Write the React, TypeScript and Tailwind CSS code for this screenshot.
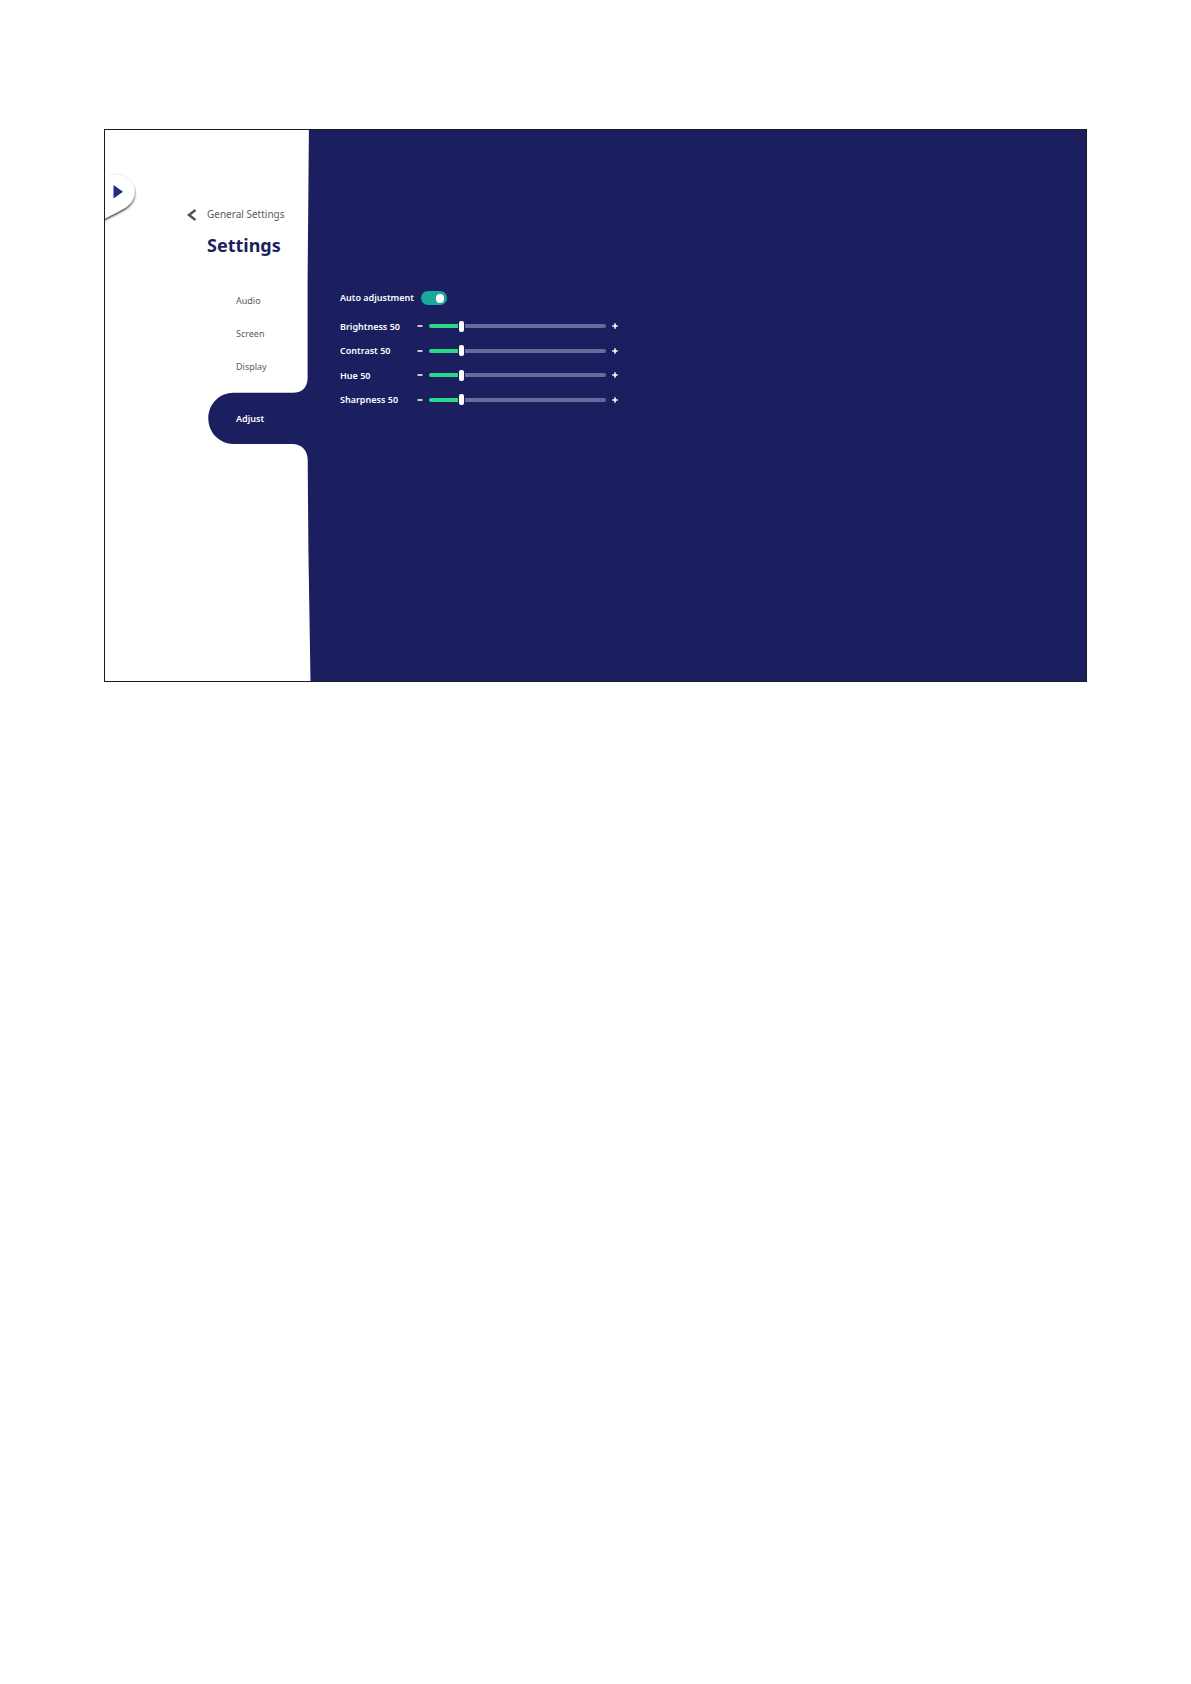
import { useState } from "react";

const menu = ["Audio", "Screen", "Display"];
const controls = ["Brightness", "Contrast", "Hue", "Sharpness"];
const MAX = 286;

function PanelEdge() {
  return (
    <svg
      className="pointer-events-none absolute inset-y-0 right-0 h-full w-[206px]"
      viewBox="0 0 206 551"
      preserveAspectRatio="none"
      aria-hidden="true"
    >
      <path
        fill="#1b1f5f"
        d="M206 0H203.9L202.6 150V247.5C202.6 257 197.500 262.700 188 262.700H128.500C114.500 262.700 103.300 274 103.300 288.300C103.300 302.600 114.500 314 128.500 314H187C197 314 202.600 320.500 202.700 330L203.400 420L205.500 551H206Z"
      />
    </svg>
  );
}

function DrawerHandle() {
  return (
    <button type="button" aria-label="Open menu" className="block h-[56px] w-[40px]">
      <svg className="h-[56px] w-[40px]" viewBox="0 0 40 56" aria-hidden="true">
        <defs>
          <filter id="handle-shadow" x="-20%" y="-20%" width="150%" height="150%">
            <feDropShadow dx="0" dy="1.500" stdDeviation="1" floodColor="#000" floodOpacity="0.9" />
          </filter>
          <clipPath id="handle-lower">
            <path d="M0 16H40V56H0Z" />
          </clipPath>
        </defs>
        <g clipPath="url(#handle-lower)">
          <path
            d="M-4 8C2 6 7 4 12 4C22.500 4 29.700 12 29.700 22C29.700 29 26 34 20 38C13.500 42 6 45 0 48.500L-4 50.500Z"
            fill="#fff"
            filter="url(#handle-shadow)"
          />
        </g>
        <path d="M5 4.800C7 4.200 9 4 12 4C20 4 26.500 9 29 16" fill="none" stroke="#000" strokeOpacity="0.08" />
        <path d="M8.500 15L18 21.700L8.500 28.500Z" fill="#232a82" />
      </svg>
    </button>
  );
}

function SliderRow({ name }: { name: string }) {
  const [value, setValue] = useState(50);
  const id = name.toLowerCase();
  const pct = (value / MAX) * 100;
  return (
    <div className="flex items-center">
      <label htmlFor={id} className="w-[77px]">
        {name} {value}
      </label>
      <button
        type="button"
        aria-label={`Decrease ${name}`}
        className="flex h-3 w-3 items-center"
        onClick={() => setValue(Math.max(0, value - 1))}
      >
        <svg className="h-[6px] w-[6px]" viewBox="0 0 6 6" aria-hidden="true">
          <path d="M0.500 3H5.500" stroke="#fff" strokeWidth="1.500" />
        </svg>
      </button>
      <input
        id={id}
        type="range"
        min={0}
        max={MAX}
        value={value}
        onChange={(e) => setValue(Number(e.target.value))}
        style={{
          backgroundImage: `linear-gradient(to right, #2bd884 ${pct}%, #666b9b ${pct}%)`,
        }}
        className="h-[4px] w-[177px] appearance-none rounded-full [&::-webkit-slider-thumb]:h-[11px] [&::-webkit-slider-thumb]:w-[5px] [&::-webkit-slider-thumb]:appearance-none [&::-webkit-slider-thumb]:rounded-[2px] [&::-webkit-slider-thumb]:bg-white [&::-webkit-slider-thumb]:shadow-[0_0_0_1px_#1b1f5f]"
      />
      <button
        type="button"
        aria-label={`Increase ${name}`}
        className="flex h-3 w-3 items-center justify-end"
        onClick={() => setValue(Math.min(MAX, value + 1))}
      >
        <svg className="h-[6px] w-[6px]" viewBox="0 0 6 6" aria-hidden="true">
          <path d="M0.300 3H5.700M3 0.300V5.700" stroke="#fff" strokeWidth="1.500" />
        </svg>
      </button>
    </div>
  );
}

export default function App() {
  const [auto, setAuto] = useState(true);
  return (
    <main className="min-h-screen bg-white px-[104px] pt-[129px] font-['Noto_Sans',sans-serif]">
      <div className="flex min-h-[553px] border border-[#1c1b22] bg-[#1b1f5f]">
        <aside className="relative flex w-[206px] shrink-0 bg-white">
          <PanelEdge />
          <div className="w-[80px] shrink-0 pt-[40px]">
            <DrawerHandle />
          </div>
          <div className="relative min-w-0 flex-1 whitespace-nowrap pt-[76px]">
            <button type="button" className="flex h-4 items-center gap-[10px] text-[10px] leading-4 text-[#5c5c60]">
              <svg className="h-[13px] w-3" viewBox="0 0 12 13" aria-hidden="true">
                <path d="M10.500 2L4 7L10.500 12" fill="none" stroke="#555" strokeWidth="2.500" />
              </svg>
              General Settings
            </button>
            <h1 className="ml-[22px] mt-[9px] text-[18px] font-bold leading-7 text-[#1b1f5f]">Settings</h1>
            <nav className="ml-[22px] mt-[25px] flex flex-col text-[9px] text-[#5c5c60]">
              {menu.map((item) => (
                <button key={item} type="button" className="h-[33px] pl-[29px] text-left">
                  {item}
                </button>
              ))}
              <button
                type="button"
                aria-current="page"
                className="mt-[10px] h-[51px] pl-[29px] text-left font-semibold text-white"
              >
                Adjust
              </button>
            </nav>
          </div>
        </aside>
        <section className="min-w-0 flex-1 whitespace-nowrap pl-[29px] pt-[160px] text-[9px] font-semibold text-white">
          <div className="flex h-4 items-center">
            <label htmlFor="auto" className="w-[81px]">
              Auto adjustment
            </label>
            <input
              id="auto"
              type="checkbox"
              role="switch"
              checked={auto}
              onChange={(e) => setAuto(e.target.checked)}
              className="flex h-[14px] w-[26px] appearance-none items-center rounded-full bg-[#666b9b] px-[3px] before:h-[9px] before:w-[8px] before:rounded-full before:bg-white checked:justify-end checked:bg-[#1aa79c]"
            />
          </div>
          <div className="mt-2 grid h-[98px] grid-rows-4">
            {controls.map((name) => (
              <SliderRow key={name} name={name} />
            ))}
          </div>
        </section>
      </div>
    </main>
  );
}
